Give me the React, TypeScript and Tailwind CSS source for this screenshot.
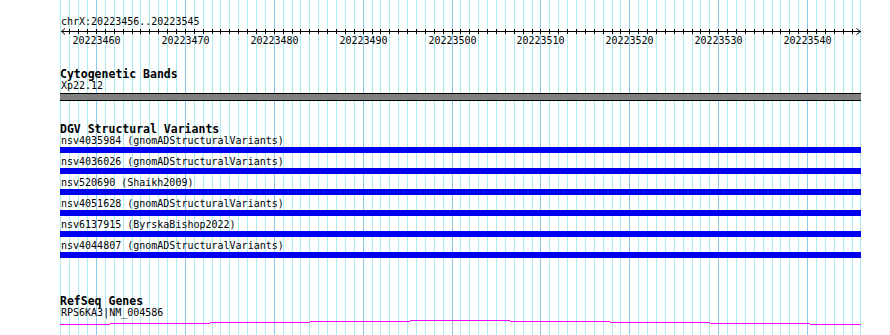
import React from "react";

const PX = 800 / 90;
const START = 20223456;
const xs = Array.from({ length: 91 }, (_, k) => Math.round(60.4 + k * PX));

const rows = [
  "nsv4035984 (gnomADStructuralVariants)",
  "nsv4036026 (gnomADStructuralVariants)",
  "nsv520690 (Shaikh2009)",
  "nsv4051628 (gnomADStructuralVariants)",
  "nsv6137915 (ByrskaBishop2022)",
  "nsv4044807 (gnomADStructuralVariants)",
];

const magenta: [number, number, number][] = [
  [60, 110, 324],
  [110, 210, 323],
  [210, 310, 322],
  [310, 410, 321],
  [410, 510, 320],
  [510, 610, 321],
  [610, 710, 322],
  [710, 810, 323],
  [810, 861, 324],
];

function Grid() {
  return (
    <svg
      className="absolute left-0 top-0 pointer-events-none"
      width={890}
      height={335}
      shapeRendering="crispEdges"
    >
      {xs.map((x, k) => {
        const major = (START + k) % 10 === 0;
        return (
          <line
            key={k}
            x1={x + 0.5}
            x2={x + 0.5}
            y1={0}
            y2={335}
            stroke={major ? "#8cc8ea" : "#aaecf0"}
            strokeWidth={1}
          />
        );
      })}
    </svg>
  );
}

function Ruler() {
  const majors = xs
    .map((x, k) => ({ x, k }))
    .filter(({ k }) => (START + k) % 10 === 0);
  return (
    <div className="pt-[16px]">
      <div className="h-[12px] leading-[12px] text-[10px] pl-[1px]">
        chrX:20223456..20223545
      </div>
      <svg width={802} height={7} className="block" shapeRendering="crispEdges">
        <line x1={1} x2={801} y1={3.5} y2={3.5} stroke="#000" strokeWidth={1} />
        {xs.map((x, k) =>
          k === 0 || k === 90 ? null : (
            <line
              key={k}
              x1={x - 60 + 0.5}
              x2={x - 60 + 0.5}
              y1={1}
              y2={6}
              stroke="#000"
              strokeWidth={1}
            />
          )
        )}
        <polyline
          points="5,0.5 1.5,3.5 5,6.5"
          fill="none"
          stroke="#000"
          strokeWidth={1}
          shapeRendering="auto"
        />
        <polyline
          points="796.5,0.5 800.5,3.5 796.5,6.5"
          fill="none"
          stroke="#000"
          strokeWidth={1}
          shapeRendering="auto"
        />
      </svg>
      <div className="relative h-[12px] text-[10px] leading-[12px]">
        {majors.map(({ x, k }) => (
          <span
            key={k}
            className="absolute top-0 -translate-x-1/2 whitespace-nowrap"
            style={{ left: x - 60 + 0.5 }}
          >
            {START + k}
          </span>
        ))}
      </div>
    </div>
  );
}

export default function App() {
  return (
    <div className="relative w-[890px] h-[335px] overflow-hidden bg-white text-black font-['DejaVu_Sans_Mono',monospace]">
      <Grid />
      <div className="relative ml-[60px] w-[801px]">
        <Ruler />

        <div className="mt-[20px] h-[14px] text-[11.5px] leading-[14px] font-bold">
          Cytogenetic Bands
        </div>
        <div className="h-[10px] text-[10px] leading-[10px] pl-[1px]">Xp22.12</div>
        <div className="mt-[2px] h-[8px] border-y border-black bg-[#808080]" />

        <div className="mt-[21px] h-[14px] text-[11.5px] leading-[14px] font-bold">
          DGV Structural Variants
        </div>
        <div className="flex flex-col">
          {rows.map((r, i) => (
            <div key={i} className="flex flex-col pb-[4px]">
              <div className="h-[10px] text-[10px] leading-[10px] pl-[1px] whitespace-nowrap">
                {r}
              </div>
              <div className="mt-[1px] h-[6px] bg-[#0000f0]" />
            </div>
          ))}
        </div>

        <div className="mt-[32px] h-[14px] text-[11.5px] leading-[14px] font-bold">
          RefSeq Genes
        </div>
        <div className="h-[10px] text-[10px] leading-[10px] pl-[1px]">
          RPS6KA3|NM_004586
        </div>
        <svg width={801} height={8} className="block" shapeRendering="crispEdges">
          {magenta.map(([a, b, y], i) => (
            <line
              key={i}
              x1={a - 60}
              x2={b - 60}
              y1={y - 318 + 0.5}
              y2={y - 318 + 0.5}
              stroke="#ff00ff"
              strokeWidth={1}
            />
          ))}
        </svg>
      </div>
    </div>
  );
}
